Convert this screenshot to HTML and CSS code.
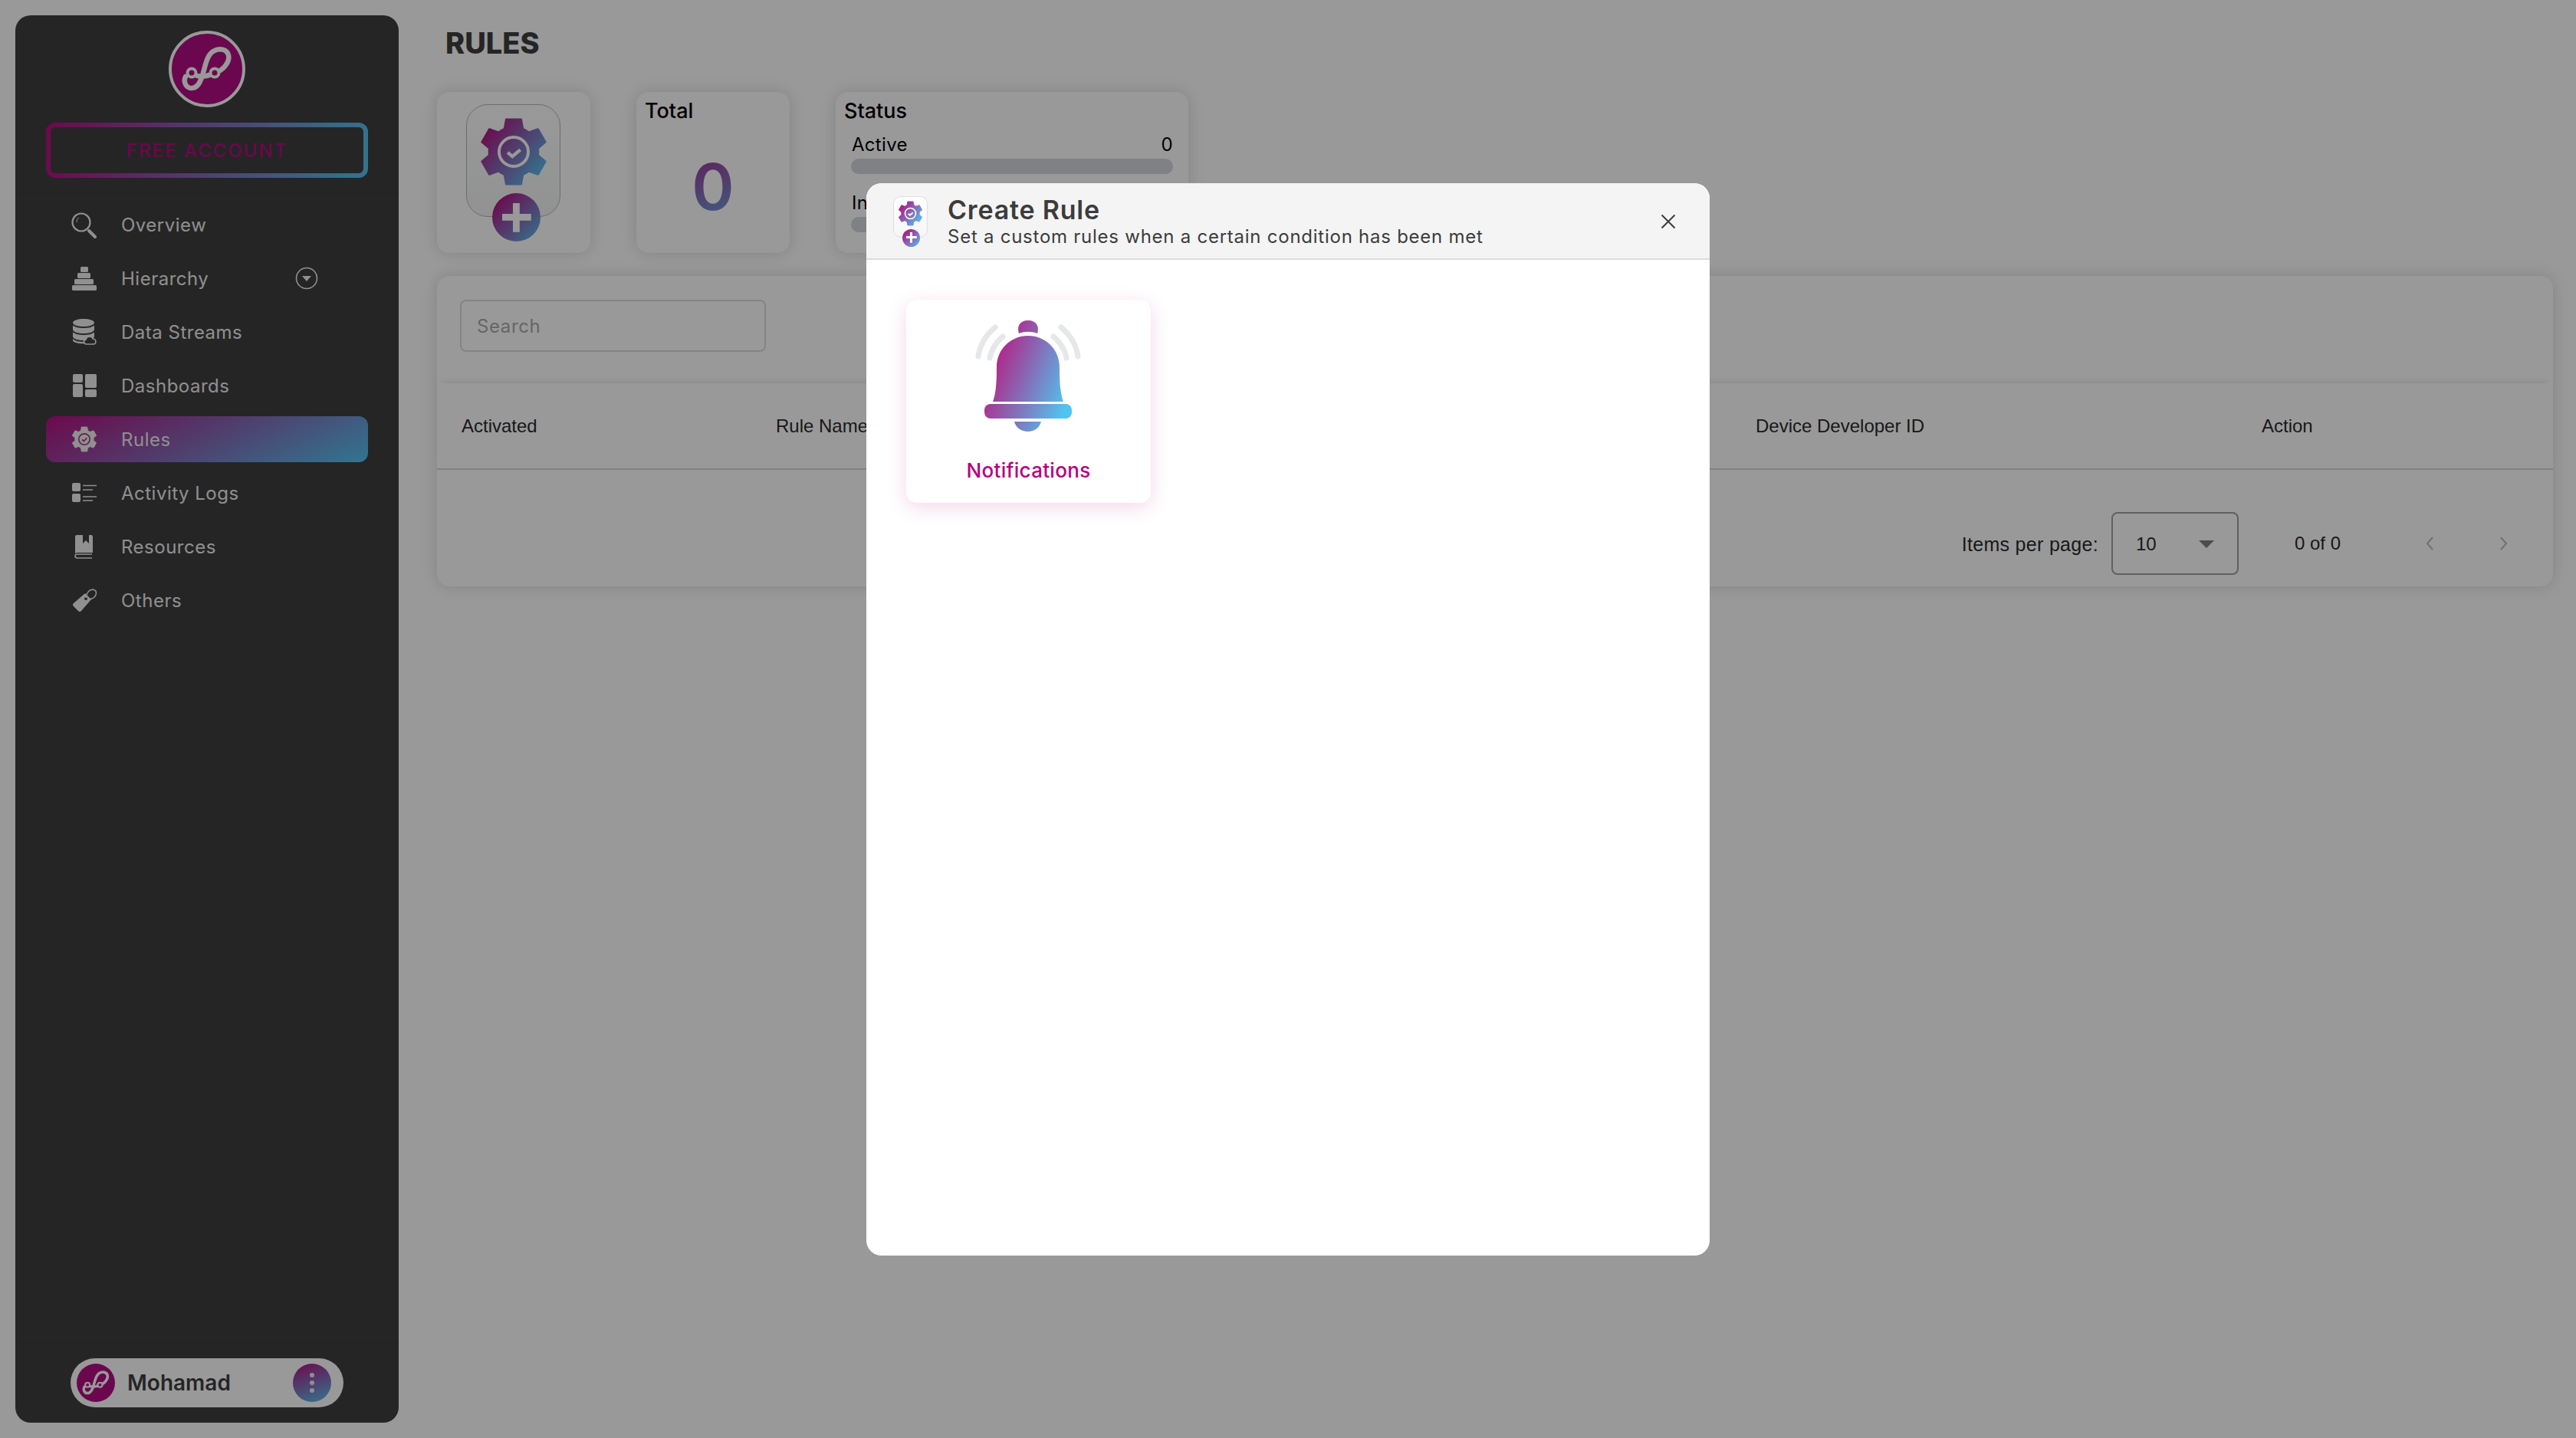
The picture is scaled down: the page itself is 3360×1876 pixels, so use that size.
FILE: index.html
```html
<!DOCTYPE html>
<html lang="en">
<head>
    <meta charset="UTF-8">
    <title>Rules</title>
    <link rel="stylesheet" href="styles.css">
</head>
<body>

<svg class="svg-defs" aria-hidden="true">
    <defs>
        <linearGradient id="brand" gradientUnits="userSpaceOnUse" x1="5" y1="15" x2="95" y2="85">
            <stop offset="0" stop-color="#b5107f"/>
            <stop offset="1" stop-color="#55c3ef"/>
        </linearGradient>
        <linearGradient id="bell" gradientUnits="userSpaceOnUse" x1="55" y1="70" x2="158" y2="110">
            <stop offset="0" stop-color="#b22487"/>
            <stop offset="1" stop-color="#50c4f0"/>
        </linearGradient>
        <path id="gear-shape" stroke-width="3" stroke-linejoin="round" d="M36.14 15.69L38.75 1.28H61.25L63.86 15.69A37 37 0 0 1 72.78 20.84L86.57 15.9L97.82 35.38L86.64 44.85A37 37 0 0 1 86.64 55.15L97.82 64.62L86.57 84.1L72.78 79.16A37 37 0 0 1 63.86 84.31L61.25 98.72H38.75L36.14 84.31A37 37 0 0 1 27.22 79.16L13.43 84.1L2.18 64.62L13.36 55.15A37 37 0 0 1 13.36 44.85L2.18 35.38L13.43 15.9L27.22 20.84A37 37 0 0 1 36.14 15.69Z"/>
        <g id="logo-mark" fill="none" stroke-width="6.5" stroke-linecap="round">
            <path d="M60 55C72 52 80 40 78 32C76 24 66 22 58 27C50 32 48 45 45 55C42 66 38 75 30 75C22 75 19 66 22 60"/>
            <path d="M30 55C38 62 50 60 60 55"/>
        </g>
    </defs>
</svg>

<div class="layout">
    <aside class="sidebar">
        <div class="sidebar-top">
            <div class="logo">
                <svg viewBox="4 4 92 92"><use href="#logo-mark" stroke="#fff"/><circle cx="30" cy="55" r="5.5" fill="#b20c82" stroke="#fff" stroke-width="4"/><circle cx="60" cy="55" r="5.5" fill="#b20c82" stroke="#fff" stroke-width="4"/></svg>
            </div>
            <div class="free-account">FREE ACCOUNT</div>
        </div>

        <nav class="nav">
            <a class="nav-item">
                <svg class="nav-icon" viewBox="0 0 34 34"><circle cx="13" cy="14" r="11.5" fill="none" stroke="#f0f0f0" stroke-width="2.2"/><path d="M7 14c0-3 1-5 3-6" fill="none" stroke="#f0f0f0"/><path d="M23 25l8 8" stroke="#f0f0f0" stroke-width="4" stroke-linecap="round"/></svg>
                <span>Overview</span>
            </a>
            <a class="nav-item">
                <svg class="nav-icon" viewBox="0 0 34 34" fill="#f0f0f0"><rect x="12" y="2" width="10" height="7" rx="1.5"/><rect x="8" y="10" width="17" height="7" rx="1.5"/><rect x="4" y="18" width="25" height="7" rx="1.5"/><rect x="1" y="26" width="32" height="7" rx="1.5"/></svg>
                <span>Hierarchy</span>
                <svg class="nav-caret" viewBox="0 0 30 30"><circle cx="15" cy="15" r="13.5" fill="none" stroke="#f0f0f0" stroke-width="1.6"/><path d="M9 12h12l-6 7z" fill="#f0f0f0"/></svg>
            </a>
            <a class="nav-item">
                <svg class="nav-icon" viewBox="0 0 34 34"><g fill="#f0f0f0"><path d="M2 5C2 2 9 0 16 0S30 2 30 5S23 10 16 10S2 8 2 5Z"/><path d="M2 8.5C5 11 10 12 16 12S27 11 30 8.5V14C30 17 23 19 16 19S2 17 2 14Z"/><path d="M2 17.5C5 20 10 21 16 21S27 20 30 17.5V23C30 26 23 28 16 28S2 26 2 23Z"/><path d="M2 26C5 29 10 30 16 30L20 32C11 33 2 31 2 28Z"/></g><path d="M20 33C16 33 15 28 19 27C20 22 27 22 28 26C33 26 33 33 29 33Z" fill="#3e3e3e" stroke="#f0f0f0" stroke-width="1.6"/></svg>
                <span>Data Streams</span>
            </a>
            <a class="nav-item">
                <svg class="nav-icon" viewBox="0 0 34 34" fill="#f0f0f0"><rect x="2" y="2" width="13" height="11" rx="2"/><rect x="2" y="15" width="13" height="17" rx="2"/><rect x="18" y="2" width="15" height="18" rx="2"/><rect x="18" y="22" width="15" height="10" rx="2"/></svg>
                <span>Dashboards</span>
            </a>
            <a class="nav-item active">
                <svg class="nav-icon" viewBox="-2 -2 104 104"><use href="#gear-shape" fill="#f0f0f0" stroke="#f0f0f0"/><circle cx="50" cy="50" r="22" fill="none" stroke="#a8308a" stroke-width="5"/><path d="M41 51l7 7 12-13" fill="none" stroke="#a8308a" stroke-width="5"/></svg>
                <span>Rules</span>
            </a>
            <a class="nav-item">
                <svg class="nav-icon" viewBox="0 0 34 34"><rect x="1" y="4" width="11" height="11" rx="2" fill="#f0f0f0"/><rect x="1" y="18" width="11" height="11" rx="2" fill="#f0f0f0"/><path d="M15 7.5H33M15 13H28M15 22H33M15 27H28" stroke="#f0f0f0" stroke-width="1.6"/></svg>
                <span>Activity Logs</span>
            </a>
            <a class="nav-item">
                <svg class="nav-icon" viewBox="0 0 34 34"><path d="M5 27V4Q5 2 7 2H15V13L19 9L23 13V2H26Q28 2 28 4V25H8Q5 25 5 27Z" fill="#f0f0f0"/><path d="M27 32H8Q5 32 5 29.500Q5 27 8 27H27" fill="none" stroke="#f0f0f0" stroke-width="1.6"/></svg>
                <span>Resources</span>
            </a>
            <a class="nav-item">
                <svg class="nav-icon" viewBox="0 0 34 34"><path d="M3 21L18 8L26 16L13 31Q11 33 9 31L3 25Q1 23 3 21Z" fill="#f0f0f0"/><circle cx="19" cy="15" r="2" fill="#3e3e3e"/><path d="M19 14Q21 3 28 3Q34 4 32 10Q30 15 23 16" fill="none" stroke="#f0f0f0" stroke-width="1.6"/></svg>
                <span>Others</span>
            </a>
        </nav>

        <div class="sidebar-bottom">
            <div class="user-pill">
                <div class="user-avatar">
                    <svg viewBox="4 4 92 92"><use href="#logo-mark" stroke="#fff"/><circle cx="30" cy="55" r="5.5" fill="#b20c82" stroke="#fff" stroke-width="4"/><circle cx="60" cy="55" r="5.5" fill="#b20c82" stroke="#fff" stroke-width="4"/></svg>
                </div>
                <span class="user-name">Mohamad</span>
                <div class="user-menu"><i></i><i></i><i></i></div>
            </div>
        </div>
    </aside>

    <main class="content">
        <h1 class="page-title">RULES</h1>

        <div class="stats">
            <div class="stat-card add-card">
                <div class="add-tile">
                    <svg class="add-gear" viewBox="-2 -2 104 104"><use href="#gear-shape" fill="url(#brand)" stroke="url(#brand)"/><circle cx="50" cy="50" r="22" fill="none" stroke="#fff" stroke-width="4.500"/><path d="M41 51l7 6 12-10" fill="none" stroke="#fff" stroke-width="5"/></svg>
                    <div class="add-plus"></div>
                </div>
            </div>
            <div class="stat-card total-card">
                <div class="stat-title">Total</div>
                <div class="total-value">0</div>
            </div>
            <div class="stat-card status-card">
                <div class="stat-title">Status</div>
                <div class="status-row"><span>Active</span><span>0</span></div>
                <div class="status-bar"></div>
                <div class="status-row status-row-second"><span>Inactive</span><span>0</span></div>
                <div class="status-bar"></div>
            </div>
        </div>

        <section class="table-card">
            <div class="search-wrap">
                <div class="search-box">Search</div>
            </div>
            <div class="table-head">
                <div>Activated</div>
                <div>Rule Name</div>
                <div></div>
                <div>Device Developer ID</div>
                <div>Action</div>
            </div>
            <div class="paginator">
                <span class="paginator-label">Items per page:</span>
                <div class="paginator-select"><span>10</span><i class="select-arrow"></i></div>
                <span class="paginator-range">0 of 0</span>
                <svg class="paginator-btn" viewBox="0 0 24 24"><path d="M15 4l-7 8 7 8" fill="none" stroke="#bcbcbc" stroke-width="2"/></svg>
                <svg class="paginator-btn" viewBox="0 0 24 24"><path d="M9 4l7 8-7 8" fill="none" stroke="#bcbcbc" stroke-width="2"/></svg>
            </div>
        </section>
    </main>
</div>

<div class="backdrop">
    <div class="modal">
        <header class="modal-header">
            <div class="modal-tile">
                <svg class="modal-gear" viewBox="-2 -2 104 104"><use href="#gear-shape" fill="url(#brand)" stroke="url(#brand)"/><circle cx="50" cy="50" r="22" fill="none" stroke="#fff" stroke-width="5"/><path d="M41 51l7 6 12-10" fill="none" stroke="#fff" stroke-width="6"/></svg>
                <div class="modal-plus"></div>
            </div>
            <div class="modal-heading">
                <h2>Create Rule</h2>
                <p>Set a custom rules when a certain condition has been met</p>
            </div>
            <svg class="modal-close" viewBox="0 0 20 20"><path d="M1.500 1.500l17 17M18.500 1.500l-17 17" stroke="#3c3c3c" stroke-width="2"/></svg>
        </header>
        <div class="modal-body">
            <div class="rule-card">
                <svg class="bell" viewBox="0 0 200 170">
                    <g fill="none" stroke="#e6e7e8" stroke-width="7" stroke-linecap="round">
                        <path d="M58 26Q39 42 36 64"/>
                        <path d="M68 38Q54 50 51 66"/>
                        <path d="M144 26Q163 42 166 64"/>
                        <path d="M134 38Q148 50 151 66"/>
                    </g>
                    <g fill="url(#bell)">
                        <path d="M89 34C86 25 90 17 101 17C112 17 116 25 113 34C105 31 97 31 89 34Z"/>
                        <path d="M55 123C60 110 60 90 60 78C60 55 78 37 101 37C124 37 142 55 142 78C142 90 142 110 147 123Z"/>
                        <rect x="44" y="126" width="114" height="19" rx="8"/>
                        <path d="M83 149H118C116 157 109 162 101 162C92 162 85 157 83 149Z"/>
                    </g>
                </svg>
                <div class="rule-label">Notifications</div>
            </div>
        </div>
    </div>
</div>

</body>
</html>
```

FILE: styles.css
```css
* {
    box-sizing: border-box;
}

body {
    font-family: 'Inter', 'Liberation Sans', sans-serif;
    background-color: #fff;
    margin: 0;
    padding: 0;
    overflow: hidden;
}

.svg-defs {
    position: absolute;
    width: 0;
    height: 0;
}

.layout {
    display: flex;
    height: 100vh;
    padding: 20px 30px 20px 20px;
}

/* sidebar */
.sidebar {
    width: 500px;
    flex: none;
    display: flex;
    flex-direction: column;
    background-color: #3e3e3e;
    border-radius: 20px;
}

.sidebar-top {
    padding: 20px 40px;
    border-bottom: 1px solid #383838;
}

.logo {
    width: 100px;
    height: 100px;
    margin: 0 auto 20px;
    border-radius: 50%;
    border: 4px solid #fff;
    background-color: #b20c82;
}

.logo svg {
    display: block;
    width: 100%;
    height: 100%;
}

.free-account {
    height: 72px;
    display: flex;
    align-items: center;
    justify-content: center;
    font-size: 24px;
    font-weight: 500;
    letter-spacing: 2px;
    color: #b20c82;
    border: 6px solid transparent;
    border-radius: 12px;
    background: linear-gradient(#3e3e3e, #3e3e3e) padding-box,
                linear-gradient(100deg, #b5107f, #55c3ef) border-box;
}

.nav {
    display: flex;
    flex-direction: column;
    gap: 10px;
    padding: 10px 40px;
}

.nav-item {
    position: relative;
    display: flex;
    align-items: center;
    gap: 31px;
    height: 60px;
    padding-left: 33px;
    color: #eee;
    font-size: 24px;
    letter-spacing: 0.5px;
    border-radius: 12px;
}

.nav-item.active {
    background: linear-gradient(155deg, #b5107f, #55c3ef);
}

.nav-icon {
    width: 34px;
    height: 34px;
    flex: none;
    overflow: visible;
}

.nav-caret {
    position: absolute;
    left: 325px;
    top: 15px;
    width: 30px;
    height: 30px;
}

.sidebar-bottom {
    margin-top: auto;
    padding: 20px 72px;
    border-top: 1px solid #383838;
}

.user-pill {
    display: flex;
    align-items: center;
    height: 64px;
    padding: 0 16px 0 8px;
    background-color: #fff;
    border-radius: 32px;
}

.user-avatar {
    width: 50px;
    height: 50px;
    border-radius: 50%;
    background-color: #b20c82;
}

.user-avatar svg {
    display: block;
    width: 100%;
    height: 100%;
}

.user-name {
    margin-left: 16px;
    font-size: 28px;
    font-weight: 600;
    color: #3e3e3e;
}

.user-menu {
    margin-left: auto;
    width: 50px;
    height: 50px;
    border-radius: 50%;
    display: flex;
    flex-direction: column;
    align-items: center;
    justify-content: center;
    gap: 4px;
    background: linear-gradient(160deg, #b5107f, #55c3ef);
}

.user-menu i {
    width: 6px;
    height: 6px;
    border-radius: 50%;
    background-color: #eee;
}

/* main content */
.content {
    flex: 1;
    margin-left: 50px;
    min-width: 0;
}

.page-title {
    margin: 0 0 28px 11px;
    font-size: 38px;
    font-weight: 800;
    line-height: 72px;
    color: #3e3e3e;
}

.stats {
    display: flex;
    gap: 60px;
}

.stat-card {
    position: relative;
    width: 200px;
    height: 210px;
    background-color: #fff;
    border-radius: 16px;
    box-shadow: 0 0 20px rgba(0, 0, 0, 0.15);
}

.add-tile {
    position: absolute;
    left: 38px;
    top: 16px;
    width: 123px;
    height: 147px;
    border: 1px solid #b5b5b5;
    border-radius: 28px;
    background: linear-gradient(#fff, #f2f4f3);
}

.add-gear {
    position: absolute;
    left: 16px;
    top: 14px;
    width: 90px;
    height: 94px;
}

.add-plus,
.modal-plus {
    position: absolute;
    border-radius: 50%;
    background: linear-gradient(#fff, #fff) center / 60% 14% no-repeat,
                linear-gradient(#fff, #fff) center / 14% 60% no-repeat,
                linear-gradient(135deg, #b5107f 10%, #55c3ef);
}

.add-plus {
    left: 33px;
    top: 115px;
    width: 63px;
    height: 63px;
}

.stat-title {
    padding: 8px 0 0 11px;
    font-size: 27px;
    font-weight: 500;
    line-height: 34px;
    color: #000;
}

.total-value {
    margin-top: 32px;
    text-align: center;
    font-size: 84px;
    font-weight: 600;
    line-height: 100px;
    color: transparent;
    background: linear-gradient(160deg, #b5107f, #55c3ef);
    -webkit-background-clip: text;
    background-clip: text;
}

.status-card {
    width: 460px;
}

.status-row {
    display: flex;
    justify-content: space-between;
    margin: 9px 20px 0 21px;
    font-size: 24px;
    line-height: 36px;
    letter-spacing: 0.3px;
    color: #000;
}

.status-row-second {
    margin-top: 20px;
}

.status-bar {
    height: 20px;
    margin: 0 20px;
    background-color: #d6d7dc;
    border-radius: 10px;
}

.table-card {
    margin-top: 30px;
    height: 405px;
    background-color: #fff;
    border-radius: 16px;
    box-shadow: 0 0 20px rgba(0, 0, 0, 0.15);
}

.search-wrap {
    height: 140px;
    padding: 31px 30px 0;
}

.search-box {
    width: 399px;
    height: 68px;
    display: flex;
    align-items: center;
    padding-left: 20px;
    font-size: 24px;
    letter-spacing: 0.6px;
    color: #aaa;
    border: 2px solid #dcdcdc;
    border-radius: 8px;
}

.table-head {
    display: grid;
    grid-template-columns: 410px 638px 640px 660px 1fr;
    align-items: center;
    height: 113px;
    padding-left: 32px;
    font-family: 'Liberation Sans', sans-serif;
    font-size: 24px;
    color: #2b2b2b;
    border-bottom: 2px solid #d8d8d8;
    box-shadow: 0 -8px 10px -8px rgba(0, 0, 0, 0.15);
}

.paginator {
    display: flex;
    align-items: center;
    justify-content: flex-end;
    padding: 55px 0 0;
    font-family: 'Liberation Sans', sans-serif;
    font-size: 24px;
    color: #2b2b2b;
}

.paginator-label {
    padding-top: 2px;
    font-size: 25px;
    letter-spacing: 0.3px;
}

.paginator-select {
    display: flex;
    align-items: center;
    justify-content: space-between;
    width: 166px;
    height: 82px;
    margin-left: 17px;
    padding: 2px 30px 0;
    border: 2px solid #a0a0a0;
    border-radius: 8px;
}

.select-arrow {
    width: 0;
    height: 0;
    border-left: 10px solid transparent;
    border-right: 10px solid transparent;
    border-top: 10px solid #808080;
}

.paginator-range {
    margin-left: 73px;
}

.paginator-btn {
    width: 24px;
    height: 24px;
    margin-left: 71px;
}

.paginator-range + .paginator-btn {
    margin-left: 105px;
}

.paginator-btn:last-child {
    margin-right: 53px;
}

/* modal */
.backdrop {
    position: fixed;
    top: 0;
    left: 0;
    width: 100%;
    height: 100%;
    display: flex;
    align-items: center;
    justify-content: center;
    background-color: rgba(0, 0, 0, 0.4);
}

.modal {
    width: 1100px;
    height: 1399px;
    background-color: #fff;
    border-radius: 20px;
    overflow: hidden;
}

.modal-header {
    position: relative;
    display: flex;
    align-items: center;
    height: 100px;
    padding: 3px 0 0 106px;
    background-color: #f4f4f4;
    border-bottom: 2px solid #dcdcdc;
}

.modal-tile {
    position: absolute;
    left: 35px;
    top: 17px;
    width: 45px;
    height: 54px;
    border: 1px solid #dedede;
    border-radius: 10px;
    background: linear-gradient(#fff, #f6f6f6);
}

.modal-gear {
    position: absolute;
    left: 5px;
    top: 5px;
    width: 33px;
    height: 33px;
}

.modal-plus {
    left: 11px;
    top: 42px;
    width: 23px;
    height: 23px;
}

.modal-heading h2 {
    margin: 0;
    font-size: 34px;
    font-weight: 600;
    letter-spacing: 0.8px;
    line-height: 40px;
    color: #3c3c3c;
}

.modal-heading p {
    margin: 0;
    font-size: 24px;
    letter-spacing: 0.75px;
    line-height: 30px;
    color: #3c3c3c;
}

.modal-close {
    position: absolute;
    left: 1036px;
    top: 40px;
    width: 20px;
    height: 20px;
}

.modal-body {
    padding: 52px 52px;
}

.rule-card {
    width: 319px;
    height: 265px;
    display: flex;
    flex-direction: column;
    align-items: center;
    padding-top: 10px;
    background-color: #fff;
    border-radius: 14px;
    box-shadow: 0 6px 26px rgba(181, 0, 127, 0.16);
}

.bell {
    width: 200px;
    height: 170px;
    flex: none;
    margin-left: -3px;
}

.rule-label {
    margin-top: 28px;
    font-size: 26px;
    font-weight: 500;
    letter-spacing: 0.3px;
    line-height: 30px;
    color: #b5007f;
}
```
